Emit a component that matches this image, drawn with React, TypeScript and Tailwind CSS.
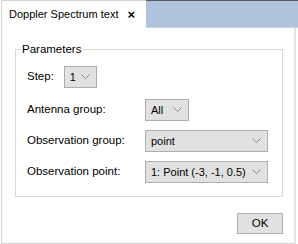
import React from 'react';

const Chevron = () => (
  <svg width="9" height="6" viewBox="0 0 9 6" fill="none" stroke="#8a8a8a" strokeWidth={1}>
    <path d="M0.5 0.5 L4.5 4.5 L8.5 0.5" />
  </svg>
);

const Combo: React.FC<{ value: string; className: string }> = ({ value, className }) => (
  <div
    className={`flex items-center justify-between h-[22px] pl-[5px] pr-[6px] bg-[#e1e1e1] border border-[#adadad] text-black text-[11px] ${className}`}
  >
    <span className="whitespace-nowrap">{value}</span>
    <Chevron />
  </div>
);

const rows = [
  { label: 'Antenna group:', value: 'All', width: 'w-[44px]' },
  { label: 'Observation group:', value: 'point', width: 'w-[123px]' },
  { label: 'Observation point:', value: '1: Point (-3, -1, 0.5)', width: 'w-[123px]' },
];

export default function App() {
  return (
    <div
      className="w-[298px] h-[244px] flex flex-col bg-white text-[11.5px] text-black overflow-hidden"
      style={{ fontFamily: '"Liberation Sans", Arial, sans-serif' }}
    >
      {/* tab strip */}
      <div className="flex h-[28px] shrink-0">
        <div className="w-[145px] flex items-center pl-[7px] gap-[9px] bg-white border-l border-t border-[#d4d4d4] ml-px">
          <span className="whitespace-nowrap text-[11px]">Doppler Spectrum text</span>
          <span className="font-bold text-[13px] leading-none">×</span>
        </div>
        <div className="flex-1 bg-[#b0c4de] border-t border-[#5a5a5a] border-b border-b-[#c8d5e6]" />
      </div>

      {/* body */}
      <div className="flex flex-1 min-h-0">
        <div className="flex-1 flex flex-col border-l border-b border-[#d4d4d4] ml-px pl-[13px] pr-[11px]">
          <fieldset className="mt-[14px] border border-[#d9d9d9] pl-[11px] pr-[10px] pb-[13px]">
            <legend className="ml-[-6px] px-[1px] leading-[14px] text-[11.5px]">Parameters</legend>
            <div className="flex items-center gap-[10px] mt-[10px]">
              <span>Step:</span>
              <Combo value="1" className="w-[33px]" />
            </div>
            <div className="flex flex-col gap-[9px] mt-[11px]">
              {rows.map((r) => (
                <div key={r.label} className="grid grid-cols-[118px_1fr] items-center">
                  <span>{r.label}</span>
                  <Combo value={r.value} className={r.width} />
                </div>
              ))}
            </div>
          </fieldset>
          <div className="flex justify-end mt-[16px]">
            <button className="w-[46px] h-[21px] bg-[#e1e1e1] border border-[#adadad]">OK</button>
          </div>
        </div>
        <div className="w-[2px] bg-[#e3e3e3]" />
        <div className="w-[2px] bg-white" />
      </div>
    </div>
  );
}
